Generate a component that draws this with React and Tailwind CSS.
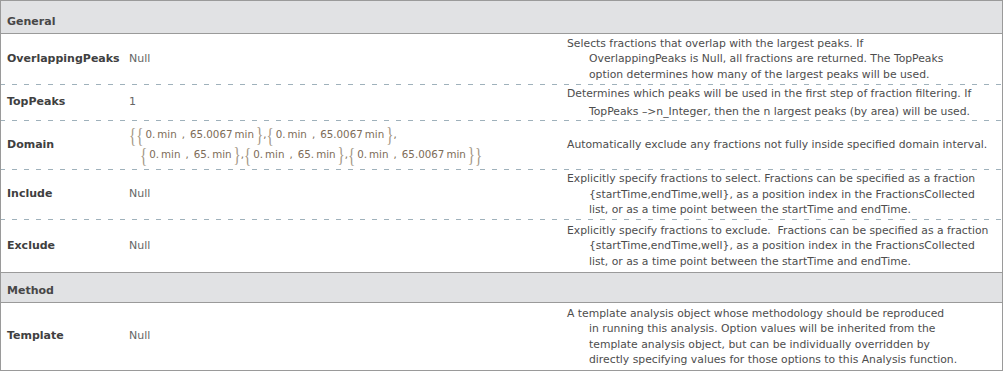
import React from "react";

// Options table: General + Method sections, one row per option.
const general = [
  {
    label: "OverlappingPeaks",
    value: "Null",
    h: "h-[50px]",
    desc: [
      "Selects fractions that overlap with the largest peaks. If",
      "OverlappingPeaks is Null, all fractions are returned. The TopPeaks",
      "option determines how many of the largest peaks will be used.",
    ],
  },
  {
    label: "TopPeaks",
    value: "1",
    h: "h-[35px]",
    tall: true,
    desc: [
      "Determines which peaks will be used in the first step of fraction filtering. If",
      "TopPeaks \u2013>n_Integer, then the n largest peaks (by area) will be used.",
    ],
  },
  {
    label: "Domain",
    value: "domain",
    h: "h-[48px]",
    desc: ["Automatically exclude any fractions not fully inside specified domain interval."],
  },
  {
    label: "Include",
    value: "Null",
    h: "h-[49px]",
    desc: [
      "Explicitly specify fractions to select. Fractions can be specified as a fraction",
      "{startTime,endTime,well}, as a position index in the FractionsCollected",
      "list, or as a time point between the startTime and endTime.",
    ],
  },
  {
    label: "Exclude",
    value: "Null",
    h: "h-[53px]",
    desc: [
      "Explicitly specify fractions to exclude.  Fractions can be specified as a fraction",
      "{startTime,endTime,well}, as a position index in the FractionsCollected",
      "list, or as a time point between the startTime and endTime.",
    ],
  },
];

const template = {
  label: "Template",
  value: "Null",
  h: "h-[67px]",
  desc: [
    "A template analysis object whose methodology should be reproduced",
    "in running this analysis. Option values will be inherited from the",
    "template analysis object, but can be individually overridden by",
    "directly specifying values for those options to this Analysis function.",
  ],
};

function Brace({ children }) {
  return (
    <span className="inline-block origin-center scale-y-[1.35] font-['Liberation_Serif',serif] text-[15px] leading-none text-[#a39684]">
      {children}
    </span>
  );
}

function Qty({ n }) {
  return (
    <span className="whitespace-nowrap">
      {n}
      <span className="ml-[2px]">min</span>
    </span>
  );
}

function Pair({ a, b }) {
  return (
    <span className="inline-flex items-center">
      <Brace>{"{"}</Brace>
      <span className="ml-[2px]">
        <Qty n={a} />
      </span>
      <span className="mx-[5px]">,</span>
      <Qty n={b} />
      <span className="ml-[2px]">
        <Brace>{"}"}</Brace>
      </span>
    </span>
  );
}

function DomainValue() {
  return (
    <div className="flex flex-col text-[10.3px] text-[#7d6c58]">
      <div className="flex h-[20px] items-center">
        <Brace>{"{"}</Brace>
        <Pair a="0." b="65.0067" />
        <span>,</span>
        <Pair a="0." b="65.0067" />
        <span>,</span>
      </div>
      <div className="flex h-[20px] items-center pl-[11px]">
        <Pair a="0." b="65." />
        <span>,</span>
        <Pair a="0." b="65." />
        <span>,</span>
        <Pair a="0." b="65.0067" />
        <Brace>{"}"}</Brace>
      </div>
    </div>
  );
}

function Dashed() {
  return (
    <div className="h-px bg-[repeating-linear-gradient(90deg,#9fb1bb_0_4px,transparent_4px_11px,#9fb1bb_11px_12px)]" />
  );
}

function Header({ title, h, border }) {
  return (
    <div className={`flex ${h} items-end bg-[#e1e2e4] pb-[5px] pl-[6px] ${border}`}>
      <span className="text-[11px] font-bold leading-[13px] text-[#474747]">{title}</span>
    </div>
  );
}

function Row({ row, last }) {
  return (
    <div className={`flex ${row.h} items-center ${last ? "border-b border-[#9a9a9a]" : ""}`}>
      <div className="w-[128px] pl-[6px] text-[11px] font-bold text-[#404040]">{row.label}</div>
      <div className="w-[438px] text-[11px] text-[#666]">
        {row.value === "domain" ? <DomainValue /> : row.value}
      </div>
      <div
        className={`flex-1 whitespace-pre text-[10.8px] text-[#4d4d4d] ${
          row.tall ? "leading-[17.5px]" : "leading-[15.5px]"
        }`}
      >
        {row.desc.map((line, i) => (
          <div key={i} className={i > 0 ? "pl-[22px]" : ""}>
            {line}
          </div>
        ))}
      </div>
    </div>
  );
}

export default function App() {
  return (
    <div className="h-[374px] w-[1004px] bg-white font-['DejaVu_Sans',sans-serif]">
      <div className="w-[1003px] border border-[#9a9a9a]">
        <Header title="General" h="h-[33px]" border="border-b border-[#9a9a9a]" />
        {general.map((row, i) => (
          <div key={row.label}>
            <Row row={row} last={i === general.length - 1} />
            {i < general.length - 1 && <Dashed />}
          </div>
        ))}
        <Header title="Method" h="h-[30px]" border="border-b border-[#9a9a9a]" />
        <Row row={template} />
      </div>
    </div>
  );
}
